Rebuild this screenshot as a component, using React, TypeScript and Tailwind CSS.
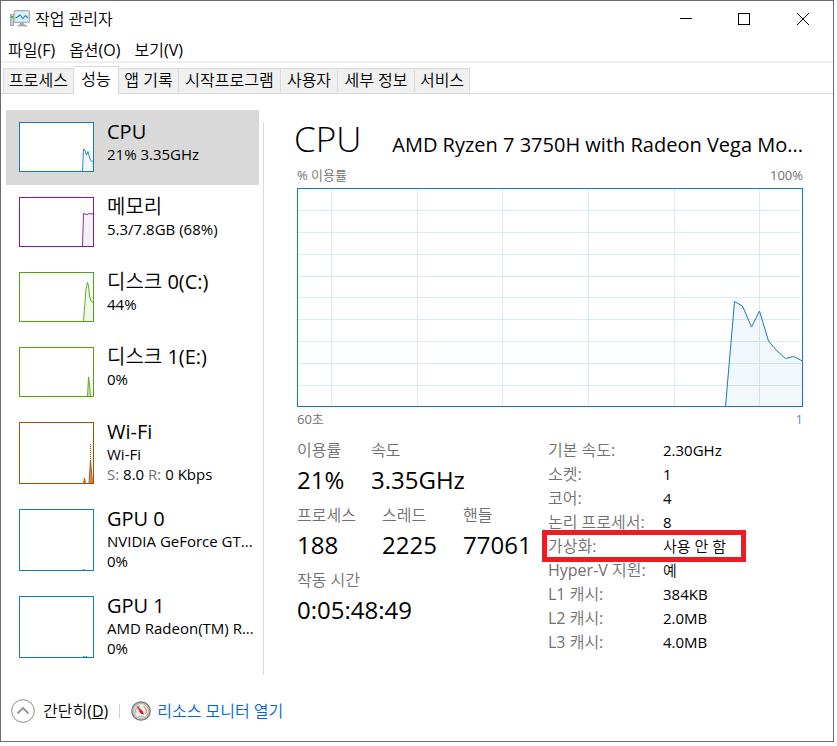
import type { ReactNode } from "react";

const TABS = [
  { label: "프로세스", width: "w-[71px]" },
  { label: "성능", width: "w-[45px]" },
  { label: "앱 기록", width: "w-[60px]" },
  { label: "시작프로그램", width: "w-[102px]" },
  { label: "사용자", width: "w-[57px]" },
  { label: "세부 정보", width: "w-[77px]" },
  { label: "서비스", width: "w-[55px]" },
];

type Device = {
  name: string;
  lines: ReactNode[];
  color: string;
  height: number;
  path?: string;
  fill?: string;
  dashed?: boolean;
};

// Paths are drawn in the thumbnail's own pixels, 75 wide
const DEVICES: Device[] = [
  {
    name: "CPU",
    lines: ["21% 3.35GHz"],
    color: "#117dbb",
    fill: "#f1f6fa",
    height: 50,
    path: "M63.5 49.5 L64.5 27 L66 28 L67.5 33 L69 29.5 L71 37 L73 39.5 L74.5 39",
  },
  {
    name: "메모리",
    lines: ["5.3/7.8GB (68%)"],
    color: "#8b12ae",
    fill: "#f4f2f4",
    height: 50,
    path: "M63.5 49.5 L64.5 16.5 L66 17 L68 17.5 L70 16.5 L72 17 L74.5 16.5",
  },
  {
    name: "디스크 0(C:)",
    lines: ["44%"],
    color: "#4da60c",
    fill: "#eff7e9",
    height: 50,
    path: "M64.5 49.5 L66 30 L67 17 L68.5 10.5 L69.5 14 L70.5 24 L72 29 L74.5 31",
  },
  {
    name: "디스크 1(E:)",
    lines: ["0%"],
    color: "#4da60c",
    fill: "#cbe5b8",
    height: 50,
    path: "M68.5 49.5 L69.5 30 L70.5 38 L71.5 49.5",
  },
  {
    name: "Wi-Fi",
    lines: [
      "Wi-Fi",
      <>
        <span className="text-[#707070]">S:</span> 8.0 <span className="text-[#707070]">R:</span> 0 Kbps
      </>,
    ],
    color: "#a74f01",
    fill: "#d98a5a",
    height: 62,
    path: "M64.5 61.5 L65.5 56 L66.5 61.5 L70 61.5 L71.5 38 L73 55 L73.5 61.5",
    dashed: true,
  },
  {
    name: "GPU 0",
    lines: ["NVIDIA GeForce GT...", "0%"],
    color: "#117dbb",
    fill: "#117dbb",
    height: 62,
    path: "M63.5 61.5 L64.5 60 L65.5 61.5",
  },
  {
    name: "GPU 1",
    lines: ["AMD Radeon(TM) R...", "0%"],
    color: "#117dbb",
    height: 62,
    path: "M64 60.5 L65.5 60.5 M66.5 60.5 L68 60.5",
  },
];

const SPECS = [
  ["기본 속도:", "2.30GHz"],
  ["소켓:", "1"],
  ["코어:", "4"],
  ["논리 프로세서:", "8"],
  ["가상화:", "사용 안 함"],
  ["Hyper-V 지원:", "예"],
  ["L1 캐시:", "384KB"],
  ["L2 캐시:", "2.0MB"],
  ["L3 캐시:", "4.0MB"],
];

const CPU_LINE = "M428.5 218.5 L437.5 113.5 L445.5 118 L454.5 139 L462.5 123 L471.5 153 L480 163 L488.5 170.5 L496.5 168.5 L505.5 173";

function AppIcon() {
  return (
    <svg className="size-5" viewBox="0 0 20 20" aria-hidden="true">
      <rect x="0.5" y="5.5" width="3" height="11" fill="#c9ccce" stroke="#a4a8ab" />
      <rect x="1" y="7" width="2" height="2" fill="#2fc52f" />
      <rect x="4" y="1.5" width="15.5" height="12" rx="0.8" fill="#d5d9dc" stroke="#a9aeb2" />
      <rect x="5.5" y="3" width="12.5" height="9" fill="#d9f1fb" />
      <path d="M5.5 8.5 L7 8.5 L10 6 L13 9.5 L15.5 6.5 L18 9" fill="none" stroke="#1a86c0" strokeWidth="1.1" />
      <path d="M10 14 H14 L15 16 H17 V17.5 H7.5 V16 H9 Z" fill="#a9adb0" />
    </svg>
  );
}

function GaugeIcon() {
  return (
    <svg className="size-5" viewBox="0 0 20 20" aria-hidden="true">
      <circle cx="10" cy="10" r="9.2" fill="#d2d2d0" stroke="#77797b" strokeWidth="1.3" />
      <circle cx="10" cy="10" r="7.4" fill="#f7f4ee" stroke="#aaaaa7" />
      <path d="M5 12.5 A5.5 5.5 0 0 1 9 4.8" fill="none" stroke="#a5a5a3" strokeWidth="1.2" />
      <path d="M12.5 5.2 A5.5 5.5 0 0 1 14.5 13" fill="none" stroke="#e8a06c" strokeWidth="1.6" />
      <path d="M5.2 4 L11.8 10.5 L13 13.6 L9.5 12.6 Z" fill="#d3141c" />
      <path d="M7 15.5 H13" stroke="#c4c2bd" strokeWidth="1.4" />
    </svg>
  );
}

function Thumbnail({ device }: { device: Device }) {
  const { height, color, fill, path, dashed } = device;
  return (
    <svg className="w-[75px] shrink-0" style={{ height }} viewBox={`0 0 75 ${height}`} aria-hidden="true">
      <rect x="0.5" y="0.5" width="74" height={height - 1} fill="#fff" />
      {path && fill && <path d={`${path} L74.5 ${height - 0.5} Z`} fill={fill} />}
      {path && <path d={path} fill="none" stroke={color} strokeWidth="0.9" />}
      {dashed && <path d="M71.5 22 V40" stroke={color} strokeDasharray="1 1" />}
      <rect x="0.5" y="0.5" width="74" height={height - 1} fill="none" stroke={color} />
    </svg>
  );
}

function DeviceRow({ device, active }: { device: Device; active: boolean }) {
  return (
    <li>
      <button
        type="button"
        className={`flex w-full gap-[13px] py-3 pl-[13px] text-left ${active ? "bg-[#d9d9d9]" : ""}`}
        style={{ height: device.height + 25 }}
      >
        <Thumbnail device={device} />
        <span className="flex min-w-0 flex-col whitespace-nowrap">
          <span className="-mt-[3px] text-xl leading-[25px]">{device.name}</span>
          {device.lines.map((line, i) => (
            <span key={i} className="text-[15px] leading-5">
              {line}
            </span>
          ))}
        </span>
      </button>
    </li>
  );
}

function CpuChart() {
  return (
    <svg className="block h-[219px] w-full" viewBox="0 0 506 219" preserveAspectRatio="none" role="img" aria-label="CPU 이용률">
      <rect x="0.5" y="0.5" width="505" height="218" fill="#fff" />
      {[22.5, 44.5, 66.5, 88.5, 109.5, 131.5, 153.5, 175.5, 197.5].map((y) => (
        <path key={y} d={`M1 ${y} H504`} stroke="#d9eaf4" />
      ))}
      {[34.5, 120.5, 205.5, 291.5, 377.5, 462.5].map((x) => (
        <path key={x} d={`M${x} 1 V218`} stroke="#d9eaf4" />
      ))}
      <path d={`${CPU_LINE} V218.5 Z`} fill="#117dbb" fillOpacity="0.06" />
      <path d={CPU_LINE} fill="none" stroke="#117dbb" />
      <rect x="0.5" y="0.5" width="505" height="218" fill="none" stroke="#117dbb" />
    </svg>
  );
}

function Stat({ label, value, className = "" }: { label: string; value: string; className?: string }) {
  return (
    <div className={className}>
      <dt className="text-base leading-6 text-[#707070]">{label}</dt>
      <dd className="text-2xl leading-9">{value}</dd>
    </div>
  );
}

export default function App() {
  return (
    <div className="flex min-h-screen bg-white pr-[3px] pb-1 font-['Open_Sans','Noto_Sans_CJK_KR_DemiLight','Noto_Sans_CJK_KR_Light','Noto_Sans_CJK_KR',sans-serif] text-black">
      <div className="flex grow flex-col border border-[#6b6b6b]">
        <header className="flex h-9 items-center pl-[9px]">
          <AppIcon />
          <h1 className="ml-[5px] text-base">작업 관리자</h1>
          <div className="ml-auto flex">
            <button type="button" aria-label="최소화" className="flex h-9 w-[58px] items-center justify-center">
              <svg className="size-3" viewBox="0 0 12 12">
                <path d="M0 5.5 H12" stroke="#000" />
              </svg>
            </button>
            <button type="button" aria-label="최대화" className="flex h-9 w-[58px] items-center justify-center">
              <svg className="size-3" viewBox="0 0 12 12">
                <rect x="0.5" y="0.5" width="11" height="11" fill="none" stroke="#000" />
              </svg>
            </button>
            <button type="button" aria-label="닫기" className="flex h-9 w-[60px] items-center justify-center">
              <svg className="size-3" viewBox="0 0 12 12">
                <path d="M0 0 L12 12 M12 0 L0 12" stroke="#000" />
              </svg>
            </button>
          </div>
        </header>

        <nav className="flex h-[26px] items-center gap-3.5 border-b-2 border-[#f0f0f0] pt-0.5 pl-[7px] text-base leading-[22px]">
          <button type="button">파일(F)</button>
          <button type="button">옵션(O)</button>
          <button type="button">보기(V)</button>
        </nav>

        <div role="tablist" className="flex h-[31px] items-end border-b border-[#d9d9d9] pl-0.5 text-base whitespace-nowrap">
          {TABS.map(({ label, width }) =>
            label === "성능" ? (
              <button
                key={label}
                type="button"
                role="tab"
                aria-selected="true"
                className={`-mb-px h-7 border-r border-[#d9d9d9] border-t bg-white pb-1 leading-6 ${width}`}
              >
                {label}
              </button>
            ) : (
              <button
                key={label}
                type="button"
                role="tab"
                aria-selected="false"
                className={`h-[25px] border-t border-r border-[#d9d9d9] bg-[#f0f0f0] pb-0.5 leading-[22px] first:border-l ${width}`}
              >
                {label}
              </button>
            ),
          )}
        </div>

        <div className="flex grow pt-4">
          <ul className="ml-[5px] w-[253px] shrink-0">
            {DEVICES.map((device) => (
              <DeviceRow key={device.name} device={device} active={device.name === "CPU"} />
            ))}
          </ul>
          <div className="mt-3 ml-1 w-px shrink-0 bg-[#d9d9d9]" />

          <main className="min-w-0 grow pr-[30px] pl-[33px]">
            <div className="-ml-[3px] flex items-baseline justify-between pt-1 whitespace-nowrap">
              <h2 className="text-[35px] leading-[50px] font-light">CPU</h2>
              <span className="text-xl">AMD Ryzen 7 3750H with Radeon Vega Mo...</span>
            </div>
            <div className="flex justify-between pt-px pb-[3px] text-[13px] leading-5 text-[#707070]">
              <span>% 이용률</span>
              <span>100%</span>
            </div>
            <CpuChart />
            <div className="flex justify-between text-[13px] leading-6 text-[#707070]">
              <span>60초</span>
              <span className="text-[#5f8fb8]">1</span>
            </div>

            <div className="mt-[7px] flex">
              <dl className="w-[251px] shrink-0">
                <div className="flex h-[65px]">
                  <Stat label="이용률" value="21%" className="w-[74px]" />
                  <Stat label="속도" value="3.35GHz" />
                </div>
                <div className="flex h-[65px]">
                  <Stat label="프로세스" value="188" className="w-[85px]" />
                  <Stat label="스레드" value="2225" className="w-[81px]" />
                  <Stat label="핸들" value="77061" />
                </div>
                <Stat label="작동 시간" value="0:05:48:49" />
              </dl>
              <dl className="leading-6">
                {SPECS.map(([label, value]) => (
                  <div key={label} className="relative flex h-6">
                    <dt className="w-[115px] text-base leading-6 whitespace-nowrap text-[#707070]">{label}</dt>
                    <dd className="w-[77px] text-[15px] leading-6 whitespace-nowrap">{value}</dd>
                    {label === "가상화:" && <div className="absolute -inset-x-1.5 -inset-y-1 border-[5px] border-[#ed1c24]" />}
                  </div>
                ))}
              </dl>
            </div>
          </main>
        </div>

        <footer className="flex h-[66px] shrink-0 items-center pt-1.5 pl-2.5 text-base">
          <button type="button" className="flex items-center gap-2">
            <svg className="size-6" viewBox="0 0 24 24" fill="none" aria-hidden="true">
              <circle cx="12" cy="12" r="11.3" stroke="#8a8a8a" />
              <path d="M6.5 14.5 L12 9 L17.5 14.5" stroke="#9a9a9a" strokeWidth="2" />
            </svg>
            <span>
              간단히(<u>D</u>)
            </span>
          </button>
          <span className="mx-[11px] h-3.5 w-px bg-[#d0d0d0]" />
          <GaugeIcon />
          <a href="#resmon" className="ml-1.5 text-[#0066dd]">
            리소스 모니터 열기
          </a>
        </footer>
      </div>
    </div>
  );
}
